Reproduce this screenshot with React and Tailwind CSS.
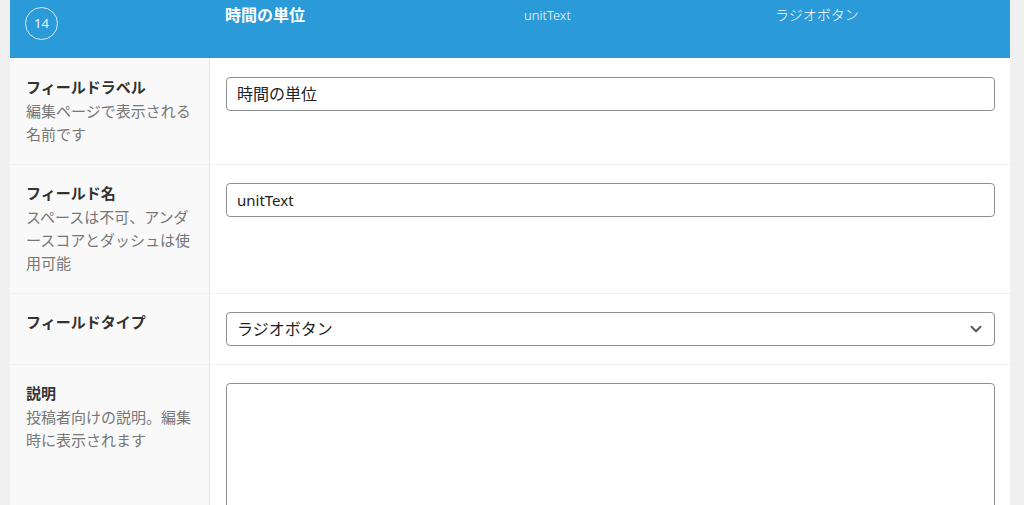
import { ChevronDown } from 'lucide-react';

const font = { fontFamily: '"Noto Sans", "Noto Sans CJK JP", sans-serif' };

function Row({ label, desc, children, first = false, last = false }) {
  const pad = first ? 'pt-[19px] pb-[18px]' : 'pt-[18px] pb-[18px]';
  return (
    <div className={`flex ${last ? '' : 'border-b border-[#f0f0f0]'}`}>
      <div className={`w-[200px] shrink-0 bg-[#f9f9f9] border-r border-[#e6e6e6] pl-4 pr-[14px] ${pad}`}>
        <div className="text-[15px] leading-[20px] font-bold text-[#333]">{label}</div>
        {desc && (
          <div className="mt-[3px] text-[15px] leading-[23px] text-[#777]">{desc}</div>
        )}
      </div>
      <div className={`flex-1 pl-4 pr-[15px] ${pad}`}>{children}</div>
    </div>
  );
}

export default function App() {
  return (
    <div className="h-[505px] overflow-hidden bg-[#f0f0f1] pl-[10px] pr-[14px]" style={font}>
      <div className="bg-white">
        {/* Header */}
        <div className="h-[58px] bg-[#2a9ad8] flex text-white">
          <div className="w-[200px] shrink-0 pl-[15px] pt-[7px]">
            <div className="w-[33px] h-[33px] rounded-full border border-white/80 flex items-center justify-center text-[13px] text-white/90">
              14
            </div>
          </div>
          <div className="flex-1 pl-[15px] pt-[4px] flex items-start text-[13px] leading-[22px]">
            <div className="w-[299px] font-bold text-[16px]">時間の単位</div>
            <div className="w-[251px] font-light">unitText</div>
            <div className="font-light text-[14px]">ラジオボタン</div>
          </div>
        </div>

        <Row label="フィールドラベル" desc="編集ページで表示される名前です" first>
          <div className="h-[34px] rounded-[4px] border border-[#8c8f94] flex items-center px-[10px] text-[16px] text-[#222]">
            時間の単位
          </div>
        </Row>

        <Row label="フィールド名" desc="スペースは不可、アンダースコアとダッシュは使用可能">
          <div className="h-[34px] rounded-[4px] border border-[#8c8f94] flex items-center px-[10px] text-[15px] text-[#222]">
            unitText
          </div>
        </Row>

        <Row label="フィールドタイプ">
          <div className="h-[34px] rounded-[4px] border border-[#8c8f94] flex items-center justify-between pl-[10px] pr-[9px] text-[16px] text-[#222]">
            <span>ラジオボタン</span>
            <ChevronDown size={18} strokeWidth={2.5} className="text-[#50575e]" />
          </div>
        </Row>

        <Row label="説明" desc="投稿者向けの説明。編集時に表示されます" last>
          <div className="relative h-[140px] rounded-[4px] border border-[#8c8f94]">
            <svg className="absolute right-[2px] bottom-[2px]" width="8" height="8" viewBox="0 0 8 8">
              <path d="M7 1 L1 7 M7 4 L4 7" stroke="#999" strokeWidth="1" />
            </svg>
          </div>
        </Row>
      </div>
    </div>
  );
}
